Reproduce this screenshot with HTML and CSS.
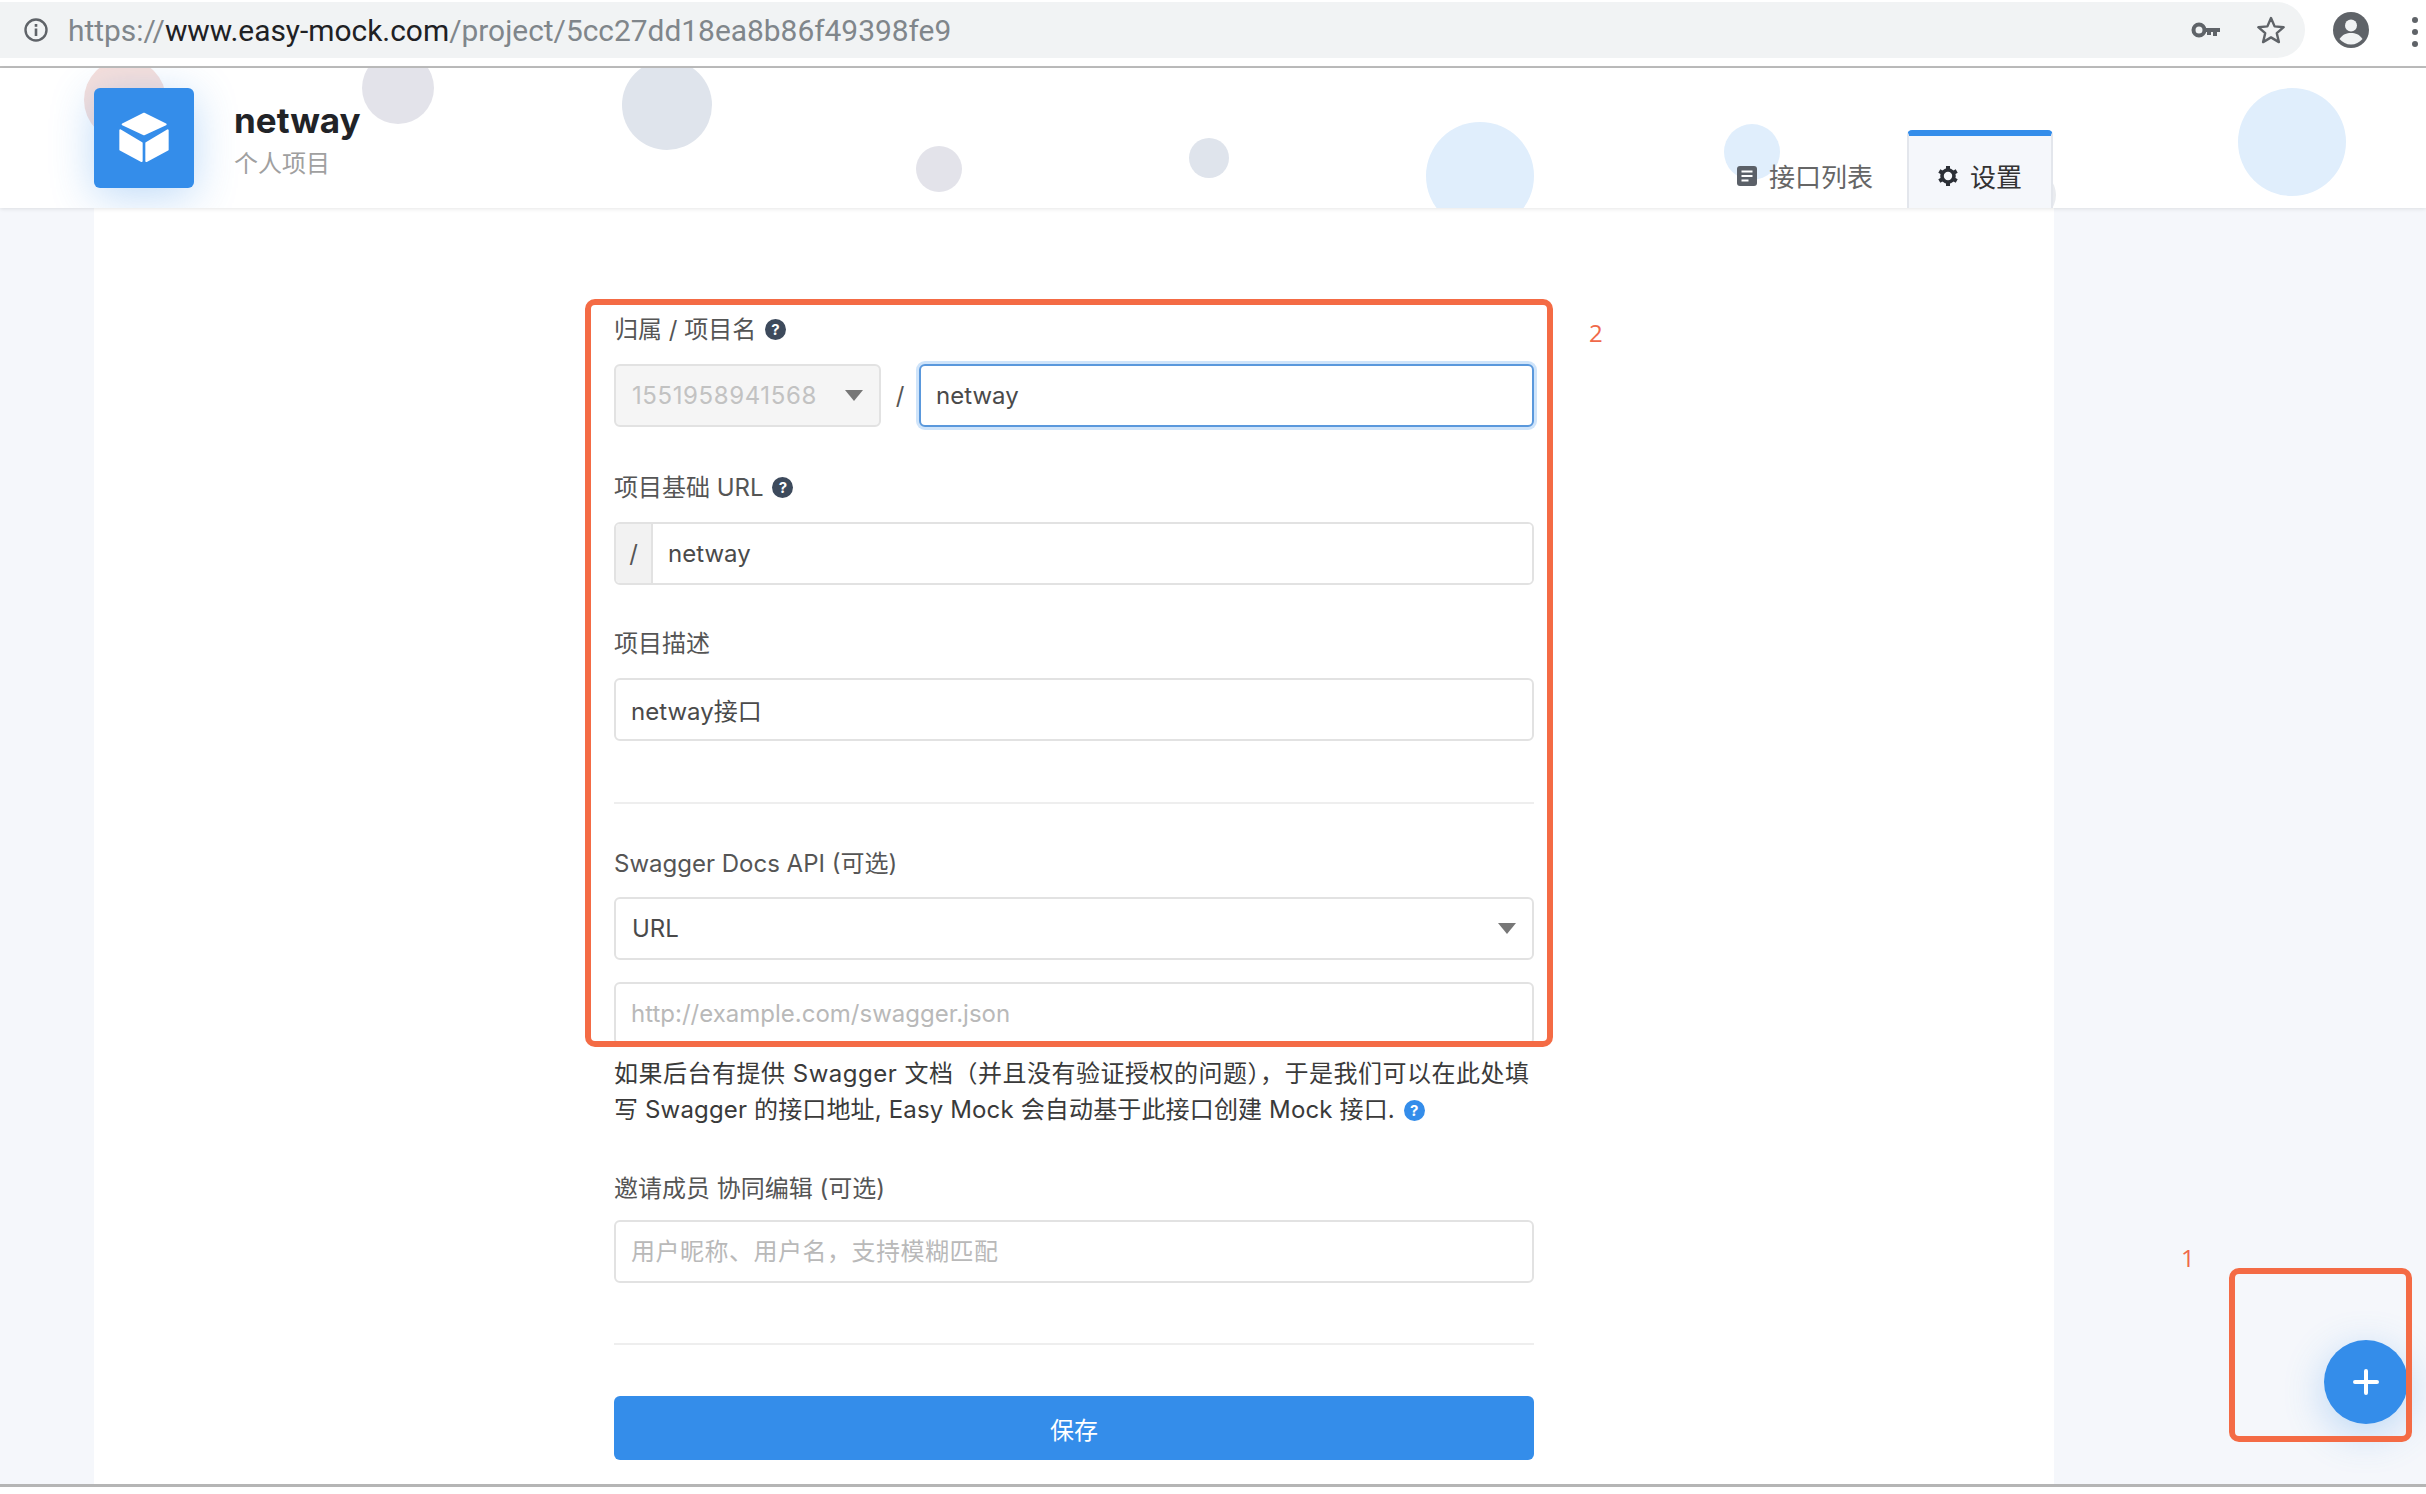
FILE: index.html
```html
<!DOCTYPE html>
<html lang="zh-CN">
<head>
<meta charset="utf-8">
<title>netway</title>
<link rel="stylesheet" href="styles.css">
</head>
<body>
<div class="chrome">
  <div class="omnibox">
    <svg class="info-icon" width="26" height="26" viewBox="0 0 26 26"><circle cx="13" cy="13" r="10.5" fill="none" stroke="#5f6368" stroke-width="2.4"/><rect x="11.7" y="11.5" width="2.6" height="7.5" fill="#5f6368"/><rect x="11.7" y="7" width="2.6" height="2.8" fill="#5f6368"/></svg>
    <div class="url">https://<span class="url-host">www.easy-mock.com</span>/project/5cc27dd18ea8b86f49398fe9</div>
    <svg class="key-icon" width="30" height="18" viewBox="0 0 30 18"><circle cx="8" cy="9" r="5.5" fill="none" stroke="#5f6368" stroke-width="4"/><path d="M14 7h15v4h-3v4h-4v-4h-2v3h-4v-3h-2z" fill="#5f6368"/></svg>
    <svg class="star-icon" width="30" height="30" viewBox="0 0 30 30"><path d="M15 3l3.6 8.4 9.1.8-6.9 6 2.1 8.9L15 22.400l-7.900 4.700 2.100-8.900-6.900-6 9.100-.8z" fill="none" stroke="#5f6368" stroke-width="2.400" stroke-linejoin="round"/></svg>
  </div>
  <svg class="avatar-icon" width="36" height="36" viewBox="0 0 36 36"><circle cx="18" cy="18" r="18" fill="#5f6368"/><circle cx="18" cy="13.500" r="6" fill="#f1f3f4"/><path d="M6.500 27c3-4.500 7-6 11.500-6s8.500 1.500 11.500 6c-3 3.500-7 5.500-11.500 5.500S9.500 30.500 6.500 27z" fill="#f1f3f4"/></svg>
  <div class="dots"><i></i><i></i><i></i></div>
</div>

<header class="header">
  <span class="bubble b-pink"></span>
  <span class="bubble b-grey1"></span>
  <span class="bubble b-grey2"></span>
  <span class="bubble b-grey3"></span>
  <span class="bubble b-grey4"></span>
  <span class="bubble b-blue1"></span>
  <span class="bubble b-blue2"></span>
  <span class="bubble b-blue3"></span>
  <span class="bubble b-faint"></span>
  <div class="logo">
    <svg width="100" height="100" viewBox="102 113 300 300"><g fill="#fff" stroke="#fff" stroke-width="6" stroke-linejoin="round"><path d="M252 190l65 32-65 30-64-30z"/><path d="M181 240l64 38v54l-64-34z"/><path d="M259 278l64-38v58l-64 34z"/></g></svg>
  </div>
  <div class="project">
    <div class="project-name">netway</div>
    <div class="project-sub">个人项目</div>
  </div>
  <nav class="tabs">
    <a class="tab">
      <svg width="20" height="20" viewBox="0 0 20 20"><rect width="20" height="20" rx="3" fill="#5b6068"/><path d="M4.500 5.500h11M4.500 10h11M4.500 14.500h7" stroke="#fff" stroke-width="2"/></svg>
      <span>接口列表</span>
    </a>
    <a class="tab tab-active">
      <svg width="20" height="20" viewBox="0 0 20 20"><circle cx="10" cy="10" r="6" fill="none" stroke="#2b2f36" stroke-width="3.600"/><g stroke="#2b2f36" stroke-width="4"><path d="M10 0v4M10 16v4M1.300 5l3.500 2M15.200 13l3.500 2M1.300 15l3.500-2M15.200 7l3.500-2"/></g></svg>
      <span>设置</span>
    </a>
  </nav>
</header>

<main class="main">
  <section class="card">
    <form class="form">
      <div class="field field-owner">
        <div class="label">归属 / 项目名 <span class="hint">?</span></div>
        <div class="owner-row">
          <div class="select select-disabled"><span>1551958941568</span><i class="caret"></i></div>
          <span class="slash">/</span>
          <input class="input input-focus" value="netway">
        </div>
      </div>
      <div class="field field-base">
        <div class="label">项目基础 URL <span class="hint">?</span></div>
        <div class="addon-group">
          <span class="addon">/</span>
          <input class="input input-addon" value="netway">
        </div>
      </div>
      <div class="field">
        <div class="label">项目描述</div>
        <input class="input" value="netway接口">
      </div>
      <hr class="rule rule-first">
      <div class="field field-swagger">
        <div class="label label-tight">Swagger Docs API (可选)</div>
        <div class="select"><span>URL</span><i class="caret"></i></div>
        <input class="input input-swagger" placeholder="http://example.com/swagger.json">
        <p class="help"><span class="help-lead">如果后台有提供 Swagger 文档（并且没有验证授权的问题），于是我们可以在此处填</span>写 Swagger 的接口地址, Easy Mock 会自动基于此接口创建 Mock 接口. <span class="hint hint-blue">?</span></p>
      </div>
      <div class="field field-invite">
        <div class="label label-tighter">邀请成员 协同编辑 (可选)</div>
        <input class="input input-invite" placeholder="用户昵称、用户名，支持模糊匹配">
      </div>
      <hr class="rule rule-second">
      <button type="button" class="save">保存</button>
      <div class="mark mark-form"></div>
      <div class="mark-num num-2">2</div>
    </form>
  </section>
</main>
<div class="page-end"></div>

<div class="mark mark-fab"></div>
<div class="mark-num num-1">1</div>
<button type="button" class="fab"><svg width="26" height="26" viewBox="0 0 26 26"><path d="M13 2v22M2 13h22" stroke="#fff" stroke-width="4" stroke-linecap="round"/></svg></button>
</body>
</html>
```
FILE: styles.css
```css
* { box-sizing: border-box; }
html, body { margin: 0; height: 1494px; overflow: hidden; }
body {
  display: flex;
  flex-direction: column;
  position: relative;
  background: #fff;
  font-family: Inter, "Noto Sans CJK SC", sans-serif;
  font-size: 24px;
  color: #4a4a4a;
}

/* browser chrome */
.chrome {
  flex: none;
  height: 68px;
  display: flex;
  align-items: flex-start;
  padding-top: 2px;
  background: #fff;
  border-bottom: 2px solid #bdbdbd;
}
.omnibox {
  width: 2305px;
  height: 56px;
  flex: none;
  display: flex;
  align-items: center;
  padding: 0 19px 0 23px;
  background: #f1f3f4;
  border-radius: 0 28px 28px 0;
}
.info-icon { flex: none; }
.url {
  margin-left: 19px;
  font-family: Roboto, sans-serif;
  font-size: 29.9px;
  color: #80868b;
  white-space: nowrap;
}
.url-host { color: #202124; }
.key-icon { margin-left: auto; flex: none; }
.star-icon { margin-left: 35px; flex: none; }
.avatar-icon { flex: none; margin: 10px 0 0 28px; }
.dots {
  display: flex;
  flex-direction: column;
  gap: 6px;
  margin: 15px 0 0 43px;
}
.dots i { width: 6px; height: 6px; border-radius: 50%; background: #5f6368; }

/* project header */
.header {
  flex: none;
  height: 140px;
  position: relative;
  z-index: 1;
  overflow: hidden;
  display: flex;
  padding: 20px 373px 0 94px;
  background: #fff;
  box-shadow: 0 1px 4px rgba(0, 0, 0, .1);
}
.bubble { position: absolute; border-radius: 50%; }
.b-pink  { left: 84px;   top: -9px; width: 82px;  height: 82px;  background: #f6dfdb; }
.b-grey1 { left: 362px;  top: -16px; width: 72px; height: 72px;  background: #e3e3ea; }
.b-grey2 { left: 622px;  top: -8px; width: 90px;  height: 90px;  background: #dfe4ec; }
.b-grey3 { left: 916px;  top: 78px; width: 46px;  height: 46px;  background: #e3e3ea; }
.b-grey4 { left: 1189px; top: 70px; width: 40px;  height: 40px;  background: #dfe4ec; }
.b-blue1 { left: 1426px; top: 54px; width: 108px; height: 108px; background: #e0eefc; }
.b-blue2 { left: 1724px; top: 56px; width: 56px;  height: 56px;  background: #e0eefc; }
.b-blue3 { left: 2238px; top: 20px; width: 108px; height: 108px; background: #e0eefc; }
.b-faint { left: 2006px; top: 102px; width: 50px; height: 50px;  background: #e9ebef; }

.logo {
  position: relative;
  flex: none;
  width: 100px;
  height: 100px;
  background: #348dea;
  border-radius: 6px;
  box-shadow: 0 8px 44px rgba(52, 141, 234, .32);
}
.logo svg { display: block; }
.project { position: relative; margin-left: 40px; }
.project-name {
  font-size: 35px;
  font-weight: 700;
  line-height: 40px;
  margin-top: 12px;
  color: #212327;
}
.project-sub {
  font-size: 24px;
  line-height: 32px;
  margin-top: 8px;
  color: #a0a0a0;
}
.tabs {
  position: relative;
  margin-left: auto;
  align-self: flex-end;
  display: flex;
  align-items: flex-end;
  height: 78px;
}
.tab {
  display: flex;
  align-items: center;
  gap: 12px;
  height: 78px;
  padding: 13px 34px 0 30px;
  font-size: 26px;
  color: #666;
}
.tab-active {
  padding: 7px 29px 0 29px;
  border: 2px solid #e3e6ec;
  border-top: 6px solid #348dea;
  border-bottom: 0;
  border-radius: 5px 5px 0 0;
  background: #f5f7fb;
  color: #333;
}

/* main */
.main {
  flex: none;
  height: 1276px;
  padding-left: 94px;
  background: #f5f7fb;
}
.card {
  width: 1960px;
  height: 1276px;
  padding-top: 103px;
  background: #fff;
}
.form { position: relative; width: 920px; margin: 0 auto; }
.field-owner { margin-bottom: 42px; }
.field-base { margin-bottom: 40px; }
.field-swagger { margin-top: 41px; }
.field-invite { margin-top: 42px; }
.label {
  height: 36px;
  line-height: 38px;
  margin-bottom: 17px;
  color: #555;
  white-space: nowrap;
}
.label-tight { margin-bottom: 16px; }
.label-tighter { margin-bottom: 14px; }
.hint {
  display: inline-flex;
  align-items: center;
  justify-content: center;
  width: 21px;
  height: 21px;
  margin-left: 2px;
  border-radius: 50%;
  background: #3d4a5c;
  color: #fff;
  font-size: 15px;
  font-weight: 700;
  line-height: 21px;
  vertical-align: 3px;
}
.hint-blue { background: #348dea; margin-left: 2px; vertical-align: 2px; }
.input {
  display: block;
  width: 100%;
  height: 63px;
  padding: 0 15px;
  border: 2px solid #e2e2e2;
  border-radius: 6px;
  outline: 0;
  background: #fff;
  font: inherit;
  color: #4a4a4a;
}
.input::placeholder { color: #b9b9b9; opacity: 1; }
.input-invite { letter-spacing: .5px; }
.owner-row { display: flex; align-items: center; }
.select {
  display: flex;
  align-items: center;
  justify-content: space-between;
  height: 63px;
  padding: 0 16px;
  border: 2px solid #e2e2e2;
  border-radius: 6px;
  background: #fff;
  color: #4a4a4a;
}
.select-disabled { flex: none; width: 267px; background: #f5f5f5; color: #c2c2c2; letter-spacing: .6px; }
.caret {
  width: 0;
  height: 0;
  border-left: 9px solid transparent;
  border-right: 9px solid transparent;
  border-top: 11px solid #777;
}
.slash { flex: none; width: 38px; text-align: center; color: #555; }
.input-focus {
  flex: 1;
  width: auto;
  border-color: #5a98dc;
  box-shadow: 0 0 0 3px #cfe4fa;
}
.addon-group {
  display: flex;
  height: 63px;
  border: 2px solid #e2e2e2;
  border-radius: 6px;
  overflow: hidden;
}
.addon {
  flex: none;
  width: 37px;
  line-height: 59px;
  text-align: center;
  background: #f2f2f2;
  border-right: 2px solid #e2e2e2;
  color: #555;
}
.input-addon { flex: 1; height: 59px; border: 0; border-radius: 0; }
.input-swagger { margin-top: 22px; }
.help {
  margin: 11px 0 0;
  line-height: 36px;
  letter-spacing: .15px;
  color: #3a3a3a;
}
.help-lead { letter-spacing: .5px; }
.rule { height: 2px; margin: 0; border: 0; background: #eee; }
.rule-first { margin-top: 61px; }
.rule-second { margin-top: 60px; }
.save {
  display: block;
  width: 100%;
  height: 64px;
  margin-top: 51px;
  border: 0;
  border-radius: 6px;
  background: #348dea;
  color: #fff;
  font: inherit;
}
.page-end {
  flex: none;
  height: 10px;
  background: #fff;
  border-top: 3px solid #b5b5b5;
}

/* annotations */
.mark {
  position: absolute;
  border: 6px solid #f46b45;
  border-radius: 10px;
  pointer-events: none;
}
.mark-form { left: -29px; top: -12px; width: 968px; height: 748px; }
.mark-fab { left: 2229px; top: 1268px; width: 183px; height: 174px; z-index: 3; }
.mark-num {
  position: absolute;
  font-family: "Open Sans", sans-serif;
  font-size: 24px;
  line-height: 32px;
  color: #f0694a;
}
.num-2 { left: 975px; top: 6px; }
.num-1 { left: 2181px; top: 1242px; }
.fab {
  position: absolute;
  left: 2324px;
  top: 1340px;
  z-index: 2;
  width: 84px;
  height: 84px;
  padding: 0;
  border: 0;
  border-radius: 50%;
  display: flex;
  align-items: center;
  justify-content: center;
  background: #348dea;
  box-shadow: 0 10px 40px rgba(52, 141, 234, .3);
}
```
